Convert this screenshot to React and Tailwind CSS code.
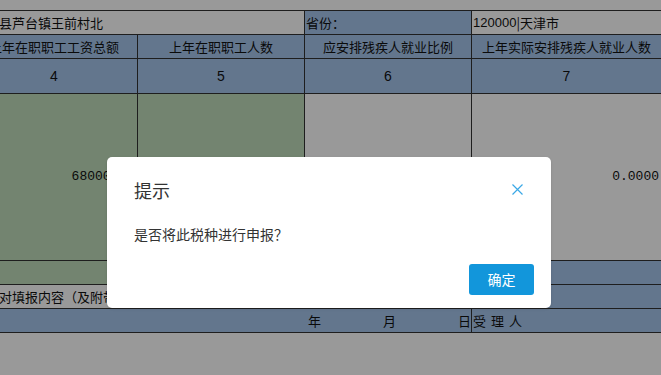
import React from "react";

const cjk = { fontFamily: '"Noto Sans CJK SC", "Noto Sans", sans-serif' };
const mono = { fontFamily: '"Liberation Mono", monospace' };
const num = { fontFamily: '"Liberation Sans", Arial, sans-serif' };

function Cell({ className = "", children, style }) {
  return (
    <div className={`flex items-center overflow-hidden whitespace-nowrap ${className}`} style={style}>
      {children}
    </div>
  );
}

export default function App() {
  const blue = "bg-[#a5c5ec]";
  const green = "bg-[#c0ddbb]";
  const white = "bg-white";
  return (
    <div className="relative w-[661px] h-[375px] overflow-hidden bg-white pt-[10px] text-[13px] text-[#111]" style={cjk}>
      <div className="ml-[-30px] w-max grid grid-cols-[166px_166px_166px_189px] grid-rows-[23px_23px_34px_166px_23px_23px_23px] gap-px bg-[#333] border border-[#333]">
        {/* row 1 */}
        <Cell className={`${white} col-span-2 pl-[2px]`}>宁河县芦台镇王前村北</Cell>
        <Cell className={`${blue} pl-[1px]`}>省份：</Cell>
        <Cell className={`${white} pl-[1px]`}><span style={num}>120000</span>|天津市</Cell>
        {/* row 2 */}
        <Cell className={`${blue} justify-center`}>上年在职职工工资总额</Cell>
        <Cell className={`${blue} justify-center`}>上年在职职工人数</Cell>
        <Cell className={`${blue} justify-center`}>应安排残疾人就业比例</Cell>
        <Cell className={`${blue} justify-center`}>上年实际安排残疾人就业人数</Cell>
        {/* row 3 */}
        <Cell className={`${blue} justify-center text-[14px]`} style={num}>4</Cell>
        <Cell className={`${blue} justify-center text-[14px]`} style={num}>5</Cell>
        <Cell className={`${blue} justify-center text-[14px]`} style={num}>6</Cell>
        <Cell className={`${blue} justify-center text-[14px]`} style={num}>7</Cell>
        {/* row 4 */}
        <Cell className={`${green} justify-end pr-[3px]`} style={mono}>68000.00</Cell>
        <Cell className={`${green} justify-end pr-[3px]`} style={mono}>200</Cell>
        <Cell className={`${white} justify-end pr-[3px]`} style={mono}>0.0150</Cell>
        <Cell className={`${white} justify-end pr-[2px]`} style={mono}>0.0000</Cell>
        {/* row 5 */}
        <Cell className={green} />
        <Cell className={green} />
        <Cell className={blue} />
        <Cell className={blue} />
        {/* row 6 */}
        <Cell className={`${white} col-span-2 pl-[2px]`}>单位对填报内容（及附带资料）的真实性、完整性负责</Cell>
        <Cell className={blue} />
        <Cell className={blue} />
        {/* row 7 */}
        <Cell className={`${blue} col-span-3 justify-end`}>
          <div className="w-[166px] flex justify-between pl-[3px]">
            <span>年</span>
            <span>月</span>
            <span>日</span>
          </div>
        </Cell>
        <Cell className={`${blue} pl-[1px] tracking-[5px]`}>受理人</Cell>
      </div>

      {/* mask */}
      <div className="absolute inset-0 bg-black/40" />

      {/* dialog */}
      <div className="absolute left-[107px] top-[157px] w-[444px] h-[151px] bg-white rounded-[5px] shadow-sm pl-[27px] pr-[17px] pt-[21px]">
        <div className="flex items-center justify-between h-[24px] pr-[11px]">
          <span className="text-[18px] leading-[24px] text-[#333]">提示</span>
          <svg width="11" height="11" viewBox="0 0 11 11" className="mt-[-1px]">
            <path d="M0.5 0.5 L10.5 10.5 M10.5 0.5 L0.5 10.5" stroke="#3aa8e6" strokeWidth="1.2" fill="none" />
          </svg>
        </div>
        <div className="mt-[21px] text-[14px] leading-[22px] text-[#333]">是否将此税种进行申报？</div>
        <div className="mt-[19px] flex justify-end">
          <button className="w-[65px] h-[31px] rounded-[3px] bg-[#1296db] text-white text-[14px] flex items-center justify-center">
            确定
          </button>
        </div>
      </div>
    </div>
  );
}
